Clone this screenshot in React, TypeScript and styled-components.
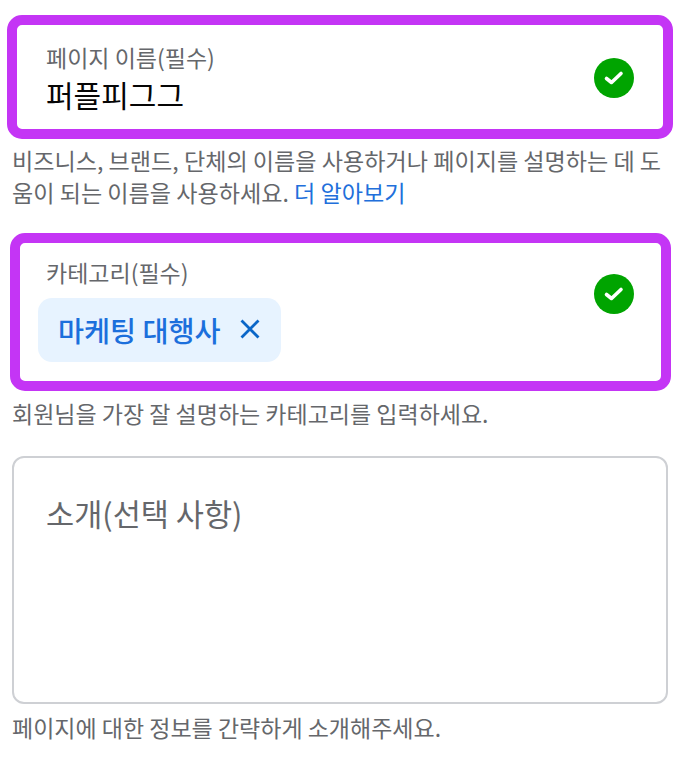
import React from 'react';
import styled, { createGlobalStyle } from 'styled-components';

const GlobalStyle = createGlobalStyle`
  html, body {
    margin: 0;
    padding: 0;
    background: #fff;
  }
  body {
    font-family: "Noto Sans CJK KR", "Noto Sans", sans-serif;
  }
`;

const CheckBadge: React.FC = () => (
  <CheckCircle>
    <svg width="22" height="18" viewBox="0 0 22 18" fill="none">
      <path d="M3.5 9.5 L8.5 13.5 L18 4.5" stroke="#fff" strokeWidth="3.6" strokeLinecap="round" strokeLinejoin="round" />
    </svg>
  </CheckCircle>
);

const App: React.FC = () => {
  return (
    <Page>
      <GlobalStyle />
      <Highlight $left={7} $width={666} $height={124}>
        <FieldBody $top={18}>
          <FieldLabel>페이지 이름(필수)</FieldLabel>
          <FieldValue>퍼플피그그</FieldValue>
        </FieldBody>
        <BadgeSlot $top={33} $right={29}>
          <CheckBadge />
        </BadgeSlot>
      </Highlight>
      <HelpText $height={94} $top={5} $size={23.1}>
        비즈니스, 브랜드, 단체의 이름을 사용하거나 페이지를 설명하는 데 도움이 되는 이름을 사용하세요. <LearnMore>더 알아보기</LearnMore>
      </HelpText>

      <Highlight $left={10} $width={661} $height={158}>
        <FieldBody $top={15} $left={26}>
          <FieldLabel>카테고리(필수)</FieldLabel>
          <Chip>
            마케팅 대행사
            <svg width="22" height="22" viewBox="0 0 22 22" fill="none">
              <path d="M2.5 2.5 L19.5 19.5 M19.5 2.5 L2.5 19.5" stroke="#0a66c8" strokeWidth="2.8" />
            </svg>
          </Chip>
        </FieldBody>
        <BadgeSlot $top={31} $right={27}>
          <CheckBadge />
        </BadgeSlot>
      </Highlight>
      <HelpText $height={65} $top={6} $size={23}>회원님을 가장 잘 설명하는 카테고리를 입력하세요.</HelpText>

      <PlainField>
        <Placeholder>소개(선택 사항)</Placeholder>
      </PlainField>
      <HelpText $height={48} $top={7} $size={23}>페이지에 대한 정보를 간략하게 소개해주세요.</HelpText>
    </Page>
  );
};

const Page = styled.div`
  width: 690px;
  height: 776px;
  padding-top: 15px;
  box-sizing: border-box;
  overflow: hidden;
  background: #fff;
`;

const Highlight = styled.div<{ $left: number; $width: number; $height: number }>`
  display: flex;
  justify-content: space-between;
  align-items: flex-start;
  box-sizing: border-box;
  margin-left: ${(p) => p.$left}px;
  width: ${(p) => p.$width}px;
  height: ${(p) => p.$height}px;
  border: 10px solid #c435f5;
  border-radius: 15px;
  background: #fff;
`;

const FieldBody = styled.div<{ $top: number; $left?: number }>`
  display: flex;
  flex-direction: column;
  align-items: flex-start;
  padding: ${(p) => p.$top}px 0 0 ${(p) => p.$left ?? 29}px;
`;

const FieldLabel = styled.div`
  font-size: 23px;
  line-height: 28px;
  color: #65676b;
`;

const FieldValue = styled.div`
  margin-top: 4px;
  font-size: 30px;
  line-height: 38px;
  color: #050505;
`;

const BadgeSlot = styled.div<{ $top: number; $right: number }>`
  padding: ${(p) => p.$top}px ${(p) => p.$right}px 0 0;
`;

const CheckCircle = styled.div`
  display: flex;
  align-items: center;
  justify-content: center;
  width: 40px;
  height: 40px;
  border-radius: 50%;
  background: #00a400;
`;

const HelpText = styled.div<{ $height: number; $top: number; $size: number }>`
  box-sizing: border-box;
  height: ${(p) => p.$height}px;
  width: 656px;
  margin-left: 12px;
  padding-top: ${(p) => p.$top}px;
  font-size: ${(p) => p.$size}px;
  line-height: 32px;
  color: #65676b;
  word-break: break-all;
`;

const LearnMore = styled.span`
  display: inline-block;
  color: #216fdb;
`;

const Chip = styled.div`
  display: flex;
  align-items: center;
  gap: 18px;
  box-sizing: border-box;
  width: 243px;
  height: 64px;
  margin: 12px 0 0 -8px;
  padding: 0 20px 2px;
  border-radius: 14px;
  background: #e7f3ff;
  color: #1b6fdc;
  font-size: 28.3px;
  font-weight: 500;
  white-space: nowrap;
`;

const PlainField = styled.div`
  box-sizing: border-box;
  width: 656px;
  height: 248px;
  margin-left: 12px;
  padding: 34px 32px;
  border: 2px solid #ced0d4;
  border-radius: 12px;
`;

const Placeholder = styled.div`
  font-size: 30.6px;
  line-height: 42px;
  color: #65676b;
`;

export default App;
